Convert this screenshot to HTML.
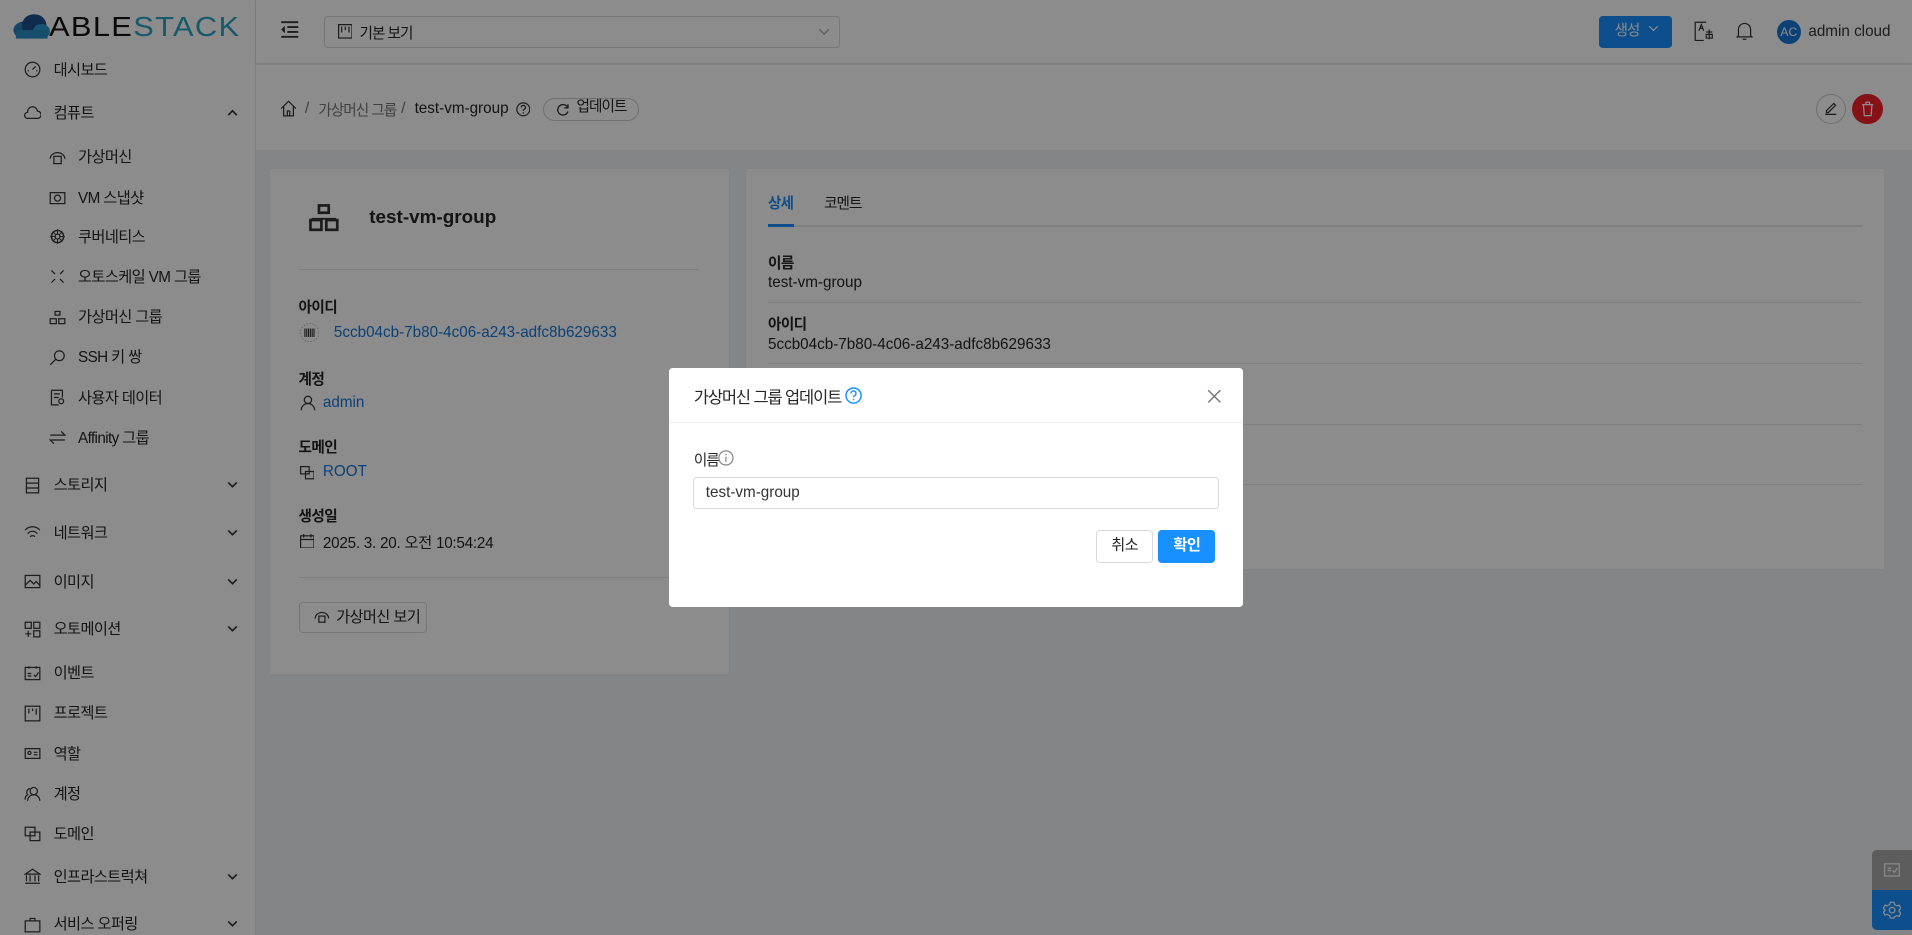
<!DOCTYPE html>
<html><head><meta charset="utf-8">
<style>
html,body{margin:0;padding:0;overflow:hidden;background:#f0f2f5}
body{zoom:1.2194;width:1568px;height:767px;position:relative;font-family:"Liberation Sans","Noto Sans CJK KR",sans-serif;font-size:13px;color:#262626}
.abs{position:absolute}
#side{left:0;top:0;width:209px;height:767px;background:#fff;border-right:1px solid #e8e8e8}
.mi{position:absolute;left:0;width:209px;height:20px;line-height:20px;font-size:12.5px;letter-spacing:-0.5px;color:#262626}
.mi svg{position:absolute;top:3px;width:14px;height:14px}
.mi .t{position:absolute;top:1px}
.top svg{left:20px}.top .t{left:44px}
.sub svg{left:40px}.sub .t{left:64px}
.mi svg.chev{left:186px;top:6px;width:9px;height:7px}
#hdr{left:210px;top:0;width:1358px;height:52px;background:#fff;box-shadow:0 1px 3px rgba(0,0,0,.08)}
#bc{left:210px;top:53px;width:1358px;height:70px;background:#fff}
.card{background:#fff;border:1px solid #eee;border-radius:2px}
.lbl{position:absolute;font-weight:bold;font-size:12px;letter-spacing:-0.5px;color:#262626}
.val{position:absolute;font-size:12.5px}
.link{color:#1677d8}
.hr{position:absolute;height:1px;background:#e8e8e8}
#mask{left:0;top:0;width:1568px;height:767px;background:rgba(0,0,0,.45)}
#modal{left:549px;top:302px;width:470px;height:196px;background:#fff;border-radius:3px}
.btn{position:absolute;border:1px solid #d9d9d9;border-radius:3px;background:#fff;text-align:center;font-size:12.5px;letter-spacing:-0.5px}
.ko{letter-spacing:-0.8px}
</style></head><body>

<div id="side" class="abs">
  <svg class="abs" style="left:9px;top:11px" width="33" height="22" viewBox="0 0 33 22"><ellipse cx="11" cy="14" rx="9" ry="7" fill="#2b7fb8"/><ellipse cx="19" cy="10" rx="10" ry="9" fill="#1d4f8c"/><ellipse cx="25" cy="15" rx="7" ry="6" fill="#2a9ccd"/><rect x="4" y="14" width="26" height="7" fill="#2a8ec5"/></svg>
  <div class="abs" style="left:40px;top:9px;font-size:23px;letter-spacing:1px;line-height:26px;transform:scaleX(1.1);transform-origin:left"><span style="color:#111">ABLE</span><span style="color:#2aa6c4">STACK</span></div>

  <div class="mi top" style="top:47px"><svg viewBox="0 0 14 14"><circle cx="7" cy="7" r="6" fill="none" stroke="#333"/><path d="M7 7L9.5 4.5M3 8h1M10 8h1" stroke="#333"/></svg><span class="t">대시보드</span></div>
  <div class="mi top" style="top:83px"><svg viewBox="0 0 14 14"><path d="M3 11h8a3 3 0 0 0 0-6 4 4 0 0 0-8 1 2.5 2.5 0 0 0 0 5z" fill="none" stroke="#333"/></svg><span class="t">컴퓨트</span><svg class="chev" viewBox="0 0 9 7"><path d="M1 5l3.5-3.5L8 5" fill="none" stroke="#333" stroke-width="1.4"/></svg></div>
  <div class="mi sub" style="top:119px"><svg viewBox="0 0 14 14"><path d="M1 8a6 5 0 0 1 12 0" fill="none" stroke="#333"/><rect x="4" y="6" width="6" height="6" fill="none" stroke="#333"/></svg><span class="t">가상머신</span></div>
  <div class="mi sub" style="top:152px"><svg viewBox="0 0 14 14"><rect x="1" y="3" width="12" height="9" fill="none" stroke="#333"/><circle cx="7" cy="7.5" r="2.5" fill="none" stroke="#333"/></svg><span class="t">VM 스냅샷</span></div>
  <div class="mi sub" style="top:184px"><svg viewBox="0 0 14 14"><circle cx="7" cy="7" r="5" fill="none" stroke="#333" stroke-width="1.2"/><path d="M7 1v12M1 7h12M3 3l8 8M11 3l-8 8" stroke="#333" stroke-width=".8"/><circle cx="7" cy="7" r="2" fill="#fff" stroke="#333"/></svg><span class="t">쿠버네티스</span></div>
  <div class="mi sub" style="top:217px"><svg viewBox="0 0 14 14"><path d="M2 2l3 3M12 2l-3 3M2 12l3-3M12 12l-3-3" stroke="#333"/></svg><span class="t">오토스케일 VM 그룹</span></div>
  <div class="mi sub" style="top:250px"><svg viewBox="0 0 14 14"><rect x="5" y="2" width="4" height="3" fill="none" stroke="#333"/><rect x="1" y="8" width="5" height="4" fill="none" stroke="#333"/><rect x="8" y="8" width="5" height="4" fill="none" stroke="#333"/></svg><span class="t">가상머신 그룹</span></div>
  <div class="mi sub" style="top:283px"><svg viewBox="0 0 14 14"><circle cx="8.5" cy="5.5" r="4" fill="none" stroke="#333"/><path d="M5.5 8.5L1 13" stroke="#333"/></svg><span class="t">SSH 키 쌍</span></div>
  <div class="mi sub" style="top:316px"><svg viewBox="0 0 14 14"><path d="M2 1h9v6M2 1v12h6" fill="none" stroke="#333"/><path d="M4 4h5M4 7h4" stroke="#333"/><circle cx="10" cy="10" r="2" fill="none" stroke="#333"/></svg><span class="t">사용자 데이터</span></div>
  <div class="mi sub" style="top:349px"><svg viewBox="0 0 14 14"><path d="M1 5h12L10 2M13 9H1l3 3" fill="none" stroke="#333"/></svg><span class="t">Affinity 그룹</span></div>
  <div class="mi top" style="top:388px"><svg viewBox="0 0 14 14"><rect x="2" y="1" width="10" height="12" fill="none" stroke="#333"/><path d="M2 5h10M2 9h10" stroke="#333"/></svg><span class="t">스토리지</span><svg class="chev" viewBox="0 0 9 7"><path d="M1 2l3.5 3.5L8 2" fill="none" stroke="#333" stroke-width="1.4"/></svg></div>
  <div class="mi top" style="top:427px"><svg viewBox="0 0 14 14"><path d="M1 5a8 8 0 0 1 12 0M3 8a5 5 0 0 1 8 0M5 10.5a2.5 2.5 0 0 1 4 0" fill="none" stroke="#333"/></svg><span class="t">네트워크</span><svg class="chev" viewBox="0 0 9 7"><path d="M1 2l3.5 3.5L8 2" fill="none" stroke="#333" stroke-width="1.4"/></svg></div>
  <div class="mi top" style="top:467px"><svg viewBox="0 0 14 14"><rect x="1" y="2" width="12" height="10" fill="none" stroke="#333"/><path d="M1 10l4-4 3 3 2-2 3 3" fill="none" stroke="#333"/></svg><span class="t">이미지</span><svg class="chev" viewBox="0 0 9 7"><path d="M1 2l3.5 3.5L8 2" fill="none" stroke="#333" stroke-width="1.4"/></svg></div>
  <div class="mi top" style="top:506px"><svg viewBox="0 0 14 14"><rect x="1" y="1" width="5" height="5" fill="none" stroke="#333"/><rect x="8" y="1" width="5" height="5" fill="none" stroke="#333"/><rect x="8" y="8" width="5" height="5" fill="none" stroke="#333"/><path d="M3.5 8v5M1 10.5h5" stroke="#333"/></svg><span class="t">오토메이션</span><svg class="chev" viewBox="0 0 9 7"><path d="M1 2l3.5 3.5L8 2" fill="none" stroke="#333" stroke-width="1.4"/></svg></div>
  <div class="mi top" style="top:542px"><svg viewBox="0 0 14 14"><rect x="1" y="2" width="12" height="10" fill="none" stroke="#333"/><path d="M4 1v2M10 1v2M3 7h3M3 9h3M8 8l1.5 1.5L12 6" fill="none" stroke="#333"/></svg><span class="t">이벤트</span></div>
  <div class="mi top" style="top:575px"><svg viewBox="0 0 14 14"><rect x="1" y="1" width="12" height="12" fill="none" stroke="#333"/><path d="M4 3v4M7 3v2M10 3v5" stroke="#333"/></svg><span class="t">프로젝트</span></div>
  <div class="mi top" style="top:608px"><svg viewBox="0 0 14 14"><rect x="1" y="3" width="12" height="8" fill="none" stroke="#333"/><circle cx="4.5" cy="6.5" r="1.3" fill="none" stroke="#333"/><path d="M8 6h3M8 8h3" stroke="#333"/></svg><span class="t">역할</span></div>
  <div class="mi top" style="top:641px"><svg viewBox="0 0 14 14"><circle cx="8" cy="5" r="3" fill="none" stroke="#333"/><path d="M3 13a5 5 0 0 1 10 0M5 3a3 3 0 0 0-2 5 4 4 0 0 0-2 4" fill="none" stroke="#333"/></svg><span class="t">계정</span></div>
  <div class="mi top" style="top:674px"><svg viewBox="0 0 14 14"><rect x="1" y="1" width="8" height="7" fill="none" stroke="#333"/><rect x="5" y="5" width="8" height="7" fill="none" stroke="#333"/></svg><span class="t">도메인</span></div>
  <div class="mi top" style="top:709px"><svg viewBox="0 0 14 14"><path d="M1 5L7 1l6 4zM2 6v5M5 6v5M9 6v5M12 6v5M1 12.5h12" fill="none" stroke="#333"/></svg><span class="t">인프라스트럭쳐</span><svg class="chev" viewBox="0 0 9 7"><path d="M1 2l3.5 3.5L8 2" fill="none" stroke="#333" stroke-width="1.4"/></svg></div>
  <div class="mi top" style="top:748px"><svg viewBox="0 0 14 14"><rect x="1" y="4" width="12" height="9" fill="none" stroke="#333"/><path d="M5 4V2h4v2" fill="none" stroke="#333"/></svg><span class="t">서비스 오퍼링</span><svg class="chev" viewBox="0 0 9 7"><path d="M1 2l3.5 3.5L8 2" fill="none" stroke="#333" stroke-width="1.4"/></svg></div>
</div>

<div id="hdr" class="abs">
  <svg class="abs" style="left:20px;top:17px" width="16" height="14" viewBox="0 0 16 14"><path d="M1 1h14M6 5h9M6 9h9M1 13h14" stroke="#333" stroke-width="1.5"/><path d="M4 4L1 7l3 3z" fill="#333"/></svg>
  <div class="abs" style="left:56px;top:13px;width:421px;height:25px;border:1px solid #d9d9d9;border-radius:3px">
    <svg class="abs" style="left:10px;top:6px" width="12" height="12" viewBox="0 0 12 12"><rect x=".5" y=".5" width="11" height="11" fill="none" stroke="#333"/><path d="M3 2v5M6 2v3M9 2v5" stroke="#333"/></svg>
    <span class="abs ko" style="left:28px;top:4px;font-size:12px">기본 보기</span>
    <svg class="abs" style="left:404px;top:9px" width="10" height="6" viewBox="0 0 10 6"><path d="M1 1l4 4 4-4" fill="none" stroke="#aaa"/></svg>
  </div>
  <div class="abs" style="left:1101px;top:13px;width:60px;height:26px;background:#1890ff;border-radius:3px;color:#fff;font-size:12px;line-height:26px"><span style="margin-left:13px" class="ko">생성</span><svg style="margin-left:7px;vertical-align:2px" width="9" height="6" viewBox="0 0 9 6"><path d="M1 1l3.5 3.5L8 1" fill="none" stroke="#fff"/></svg></div>
  <svg class="abs" style="left:1179px;top:17px" width="16" height="17" viewBox="0 0 16 17"><path d="M10 1H1v15h7" fill="none" stroke="#333"/><path d="M4 8l2-5 2 5M5 6h2" fill="none" stroke="#333"/><path d="M10 9h5M12.5 7v8M10 11h5v3h-5z" fill="none" stroke="#333"/></svg>
  <svg class="abs" style="left:1214px;top:17px" width="14" height="17" viewBox="0 0 14 17"><path d="M2 12V7a5 5 0 0 1 10 0v5l1 1H1z M5.5 15h3" fill="none" stroke="#333"/></svg>
  <div class="abs" style="left:1247px;top:16px;width:20px;height:20px;border-radius:50%;background:#1677d8;color:#fff;font-size:10px;line-height:20px;text-align:center">AC</div>
  <span class="abs" style="left:1273px;top:19px;font-size:12.5px;color:#333">admin cloud</span>
</div>

<div id="bc" class="abs">
  <svg class="abs" style="left:20px;top:29px" width="14" height="14" viewBox="0 0 14 14"><path d="M1 7L7 1l6 6M3 5v8h8V5M6 13V9h2v4" fill="none" stroke="#333"/></svg>
  <span class="abs" style="left:40px;top:29px;color:#777">/</span>
  <span class="abs ko" style="left:51px;top:28px;color:#777;font-size:12px">가상머신 그룹</span>
  <span class="abs" style="left:119px;top:29px;color:#777">/</span>
  <span class="abs" style="left:130px;top:29px;color:#262626;font-size:12.5px">test-vm-group</span>
  <svg class="abs" style="left:213px;top:31px" width="12" height="12" viewBox="0 0 12 12"><circle cx="6" cy="6" r="5.3" fill="none" stroke="#333"/><path d="M4.3 4.5a1.7 1.7 0 1 1 2.3 1.6c-.5.3-.6.6-.6 1.2" fill="none" stroke="#333"/><circle cx="6" cy="9" r=".6" fill="#333"/></svg>
  <div class="abs" style="left:235px;top:27px;width:77px;height:18px;border:1px solid #ccc;border-radius:10px;font-size:12px;line-height:18px">
    <svg class="abs" style="left:10px;top:4px" width="11" height="11" viewBox="0 0 11 11"><path d="M9.5 3.5A4.3 4.3 0 1 0 9.8 7" fill="none" stroke="#333" stroke-width="1.1"/><path d="M9.8 1v3h-3" fill="none" stroke="#333" stroke-width="1.1"/></svg>
    <span class="abs ko" style="left:27px;top:-1px">업데이트</span></div>
  <div class="abs" style="left:1279px;top:24px;width:23px;height:23px;border:1px solid #ccc;border-radius:50%"><svg style="position:absolute;left:6px;top:5px" width="11" height="12" viewBox="0 0 11 12"><path d="M2 8l6-6 1.5 1.5-6 6H2zM1 11h9" fill="none" stroke="#333"/></svg></div>
  <div class="abs" style="left:1309px;top:24px;width:25px;height:25px;background:#f5222d;border-radius:50%"><svg style="position:absolute;left:7px;top:6px" width="11" height="13" viewBox="0 0 11 13"><path d="M1 3h9M4 3V1h3v2M2 3l.7 9h5.6L9 3" fill="none" stroke="#fff"/></svg></div>
</div>

<!-- left card -->
<div class="abs card" style="left:221px;top:138px;width:376px;height:414px">
  <svg class="abs" style="left:31px;top:28px" width="26" height="24" viewBox="0 0 26 24"><rect x="9" y="2" width="8" height="6" fill="none" stroke="#333" stroke-width="2.2"/><rect x="2" y="14" width="9" height="8" fill="none" stroke="#333" stroke-width="2.2"/><rect x="15" y="14" width="9" height="8" fill="none" stroke="#333" stroke-width="2.2"/><path d="M3 13h20" stroke="#333" stroke-width="1.5"/></svg>
  <span class="abs" style="left:81px;top:31px;font-size:15.5px;font-weight:bold">test-vm-group</span>
  <div class="hr" style="left:23px;top:82px;width:328px"></div>
  <span class="lbl" style="left:23px;top:104px">아이디</span>
  <svg class="abs" style="left:24px;top:126px" width="16" height="16" viewBox="0 0 16 16"><circle cx="8" cy="8" r="7.5" fill="none" stroke="#999" stroke-dasharray="1 1.5" stroke-width=".6"/><path d="M4 4.5v7M5.5 4.5v7M7 4.5v7M8.5 4.5v7M10 4.5v7M11.5 4.5v7" stroke="#333" stroke-width=".9"/></svg>
  <span class="val link" style="left:52px;top:127px">5ccb04cb-7b80-4c06-a243-adfc8b629633</span>
  <span class="lbl" style="left:23px;top:163px">계정</span>
  <svg class="abs" style="left:24px;top:185px" width="13" height="13" viewBox="0 0 13 13"><circle cx="6.5" cy="4" r="3" fill="none" stroke="#333"/><path d="M1 12.5a5.5 5.5 0 0 1 11 0" fill="none" stroke="#333"/></svg>
  <span class="val link" style="left:43px;top:184px">admin</span>
  <span class="lbl" style="left:23px;top:219px">도메인</span>
  <svg class="abs" style="left:24px;top:243px" width="12" height="12" viewBox="0 0 12 12"><rect x=".5" y=".5" width="7" height="6" fill="none" stroke="#333"/><rect x="4.5" y="4.5" width="7" height="6" fill="none" stroke="#333"/></svg>
  <span class="val link" style="left:43px;top:241px">ROOT</span>
  <span class="lbl" style="left:23px;top:275px">생성일</span>
  <svg class="abs" style="left:24px;top:299px" width="12" height="12" viewBox="0 0 12 12"><rect x=".5" y="1.5" width="11" height="10" fill="none" stroke="#333"/><path d="M.5 4.5h11M3 0v3M9 0v3" stroke="#333"/></svg>
  <span class="val" style="left:43px;top:297px;letter-spacing:-0.2px">2025. 3. 20. 오전 10:54:24</span>
  <div class="hr" style="left:23px;top:334px;width:328px"></div>
  <div class="btn" style="left:23px;top:355px;width:104px;height:24px;line-height:24px">
    <svg class="abs" style="left:12px;top:6px" width="13" height="12" viewBox="0 0 13 12"><path d="M1 7a5.5 5 0 0 1 11 0" fill="none" stroke="#333"/><rect x="4" y="5" width="5" height="5" fill="none" stroke="#333"/></svg>
    <span class="abs" style="left:30px;top:0">가상머신 보기</span></div>
</div>

<!-- right card -->
<div class="abs card" style="left:611px;top:138px;width:933px;height:328px">
  <span class="abs ko" style="left:18px;top:19px;color:#1890ff;font-weight:bold;font-size:12px">상세</span>
  <span class="abs ko" style="left:64px;top:19px;font-size:12px">코멘트</span>
  <div class="hr" style="left:18px;top:46px;width:897px"></div>
  <div class="abs" style="left:18px;top:45px;width:21px;height:2px;background:#1890ff"></div>
  <span class="lbl" style="left:18px;top:68px">이름</span>
  <span class="val" style="left:18px;top:86px">test-vm-group</span>
  <div class="hr" style="left:18px;top:109px;width:897px"></div>
  <span class="lbl" style="left:18px;top:118px">아이디</span>
  <span class="val" style="left:18px;top:137px">5ccb04cb-7b80-4c06-a243-adfc8b629633</span>
  <div class="hr" style="left:18px;top:159px;width:897px"></div>
  <div class="hr" style="left:18px;top:209px;width:897px"></div>
  <div class="hr" style="left:18px;top:258px;width:897px"></div>
</div>

<div class="abs" style="left:1535px;top:697px;width:33px;height:33px;background:#aaa;border-radius:4px 0 0 0"><svg style="position:absolute;left:10px;top:10px" width="13" height="12" viewBox="0 0 13 12"><rect x=".5" y="1.5" width="12" height="10" fill="none" stroke="#fff"/><path d="M3 5h3M3 7h3M7 7l1.5 1.5L11 5" fill="none" stroke="#fff"/></svg></div>
<div class="abs" style="left:1535px;top:730px;width:33px;height:33px;background:#1890ff;border-radius:0 0 0 4px"><svg style="position:absolute;left:9px;top:9px" width="15" height="15" viewBox="0 0 15 15"><circle cx="7.5" cy="7.5" r="2.3" fill="none" stroke="#fff"/><path d="M6 1h3l.5 2 1.8 1 2-.6 1.4 2.5-1.5 1.6v1l1.5 1.6-1.4 2.5-2-.6-1.8 1L9 14H6l-.5-2-1.8-1-2 .6L.3 9.1 1.8 7.5 .3 5.9 1.7 3.4l2 .6 1.8-1z" fill="none" stroke="#fff"/></svg></div>

<div id="mask" class="abs"></div>

<div id="modal" class="abs">
  <span class="abs" style="left:20px;top:13px;font-size:13.5px;letter-spacing:-0.9px;color:#262626">가상머신 그룹 업데이트</span>
  <svg class="abs" style="left:144px;top:15px" width="14" height="14" viewBox="0 0 14 14"><circle cx="7" cy="7" r="6.2" fill="none" stroke="#1890ff" stroke-width="1.2"/><path d="M5 5.3a2 2 0 1 1 2.7 1.8c-.5.3-.7.6-.7 1.3" fill="none" stroke="#1890ff" stroke-width="1.2"/><circle cx="7" cy="10.3" r=".7" fill="#1890ff"/></svg>
  <svg class="abs" style="left:441px;top:17px" width="12" height="12" viewBox="0 0 12 12"><path d="M1 1l10 10M11 1L1 11" stroke="#777" stroke-width="1.2"/></svg>
  <div class="hr" style="left:0;top:44px;width:470px;background:#eee"></div>
  <span class="abs ko" style="left:20px;top:66px;font-size:12px">이름</span>
  <svg class="abs" style="left:40px;top:67px" width="13" height="13" viewBox="0 0 13 13"><circle cx="6.5" cy="6.5" r="5.8" fill="none" stroke="#888"/><path d="M6.5 5.5v4.3" stroke="#888"/><circle cx="6.5" cy="3.7" r=".6" fill="#888"/></svg>
  <div class="abs" style="left:19px;top:89px;width:430px;height:25px;border:1px solid #d9d9d9;border-radius:3px"><span class="abs" style="left:10px;top:5px;font-size:12.5px;color:#333">test-vm-group</span></div>
  <div class="btn" style="left:350px;top:133px;width:45px;height:25px;line-height:25px">취소</div>
  <div class="btn" style="left:401px;top:133px;width:45px;height:25px;line-height:25px;background:#1890ff;border-color:#1890ff;color:#fff;font-weight:bold">확인</div>
</div>
</body></html>
